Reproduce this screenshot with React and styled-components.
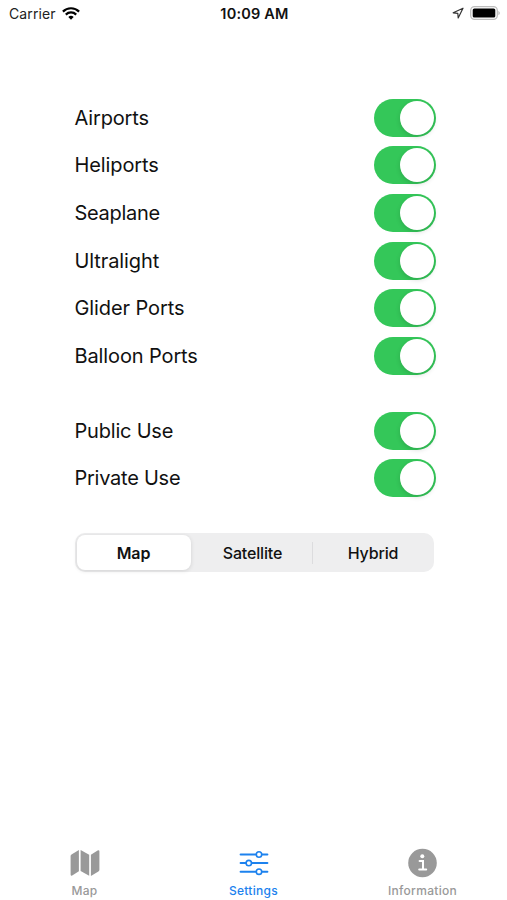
import React, { useState } from 'react'
import styled, { createGlobalStyle } from 'styled-components'

const GlobalStyle = createGlobalStyle`
  body {
    margin: 0;
    background: #fff;
    overflow: hidden;
  }
`

const Screen = styled.div`
  box-sizing: border-box;
  width: 507px;
  height: 900px;
  display: flex;
  flex-direction: column;
  background: #fff;
  color: #111;
  font-family: Inter, 'Liberation Sans', sans-serif;
`

const StatusBar = styled.header`
  display: grid;
  grid-template-columns: 1fr auto 1fr;
  align-items: center;
  height: 27px;
  padding: 0 7px 0 9px;
`

const Carrier = styled.div`
  display: flex;
  align-items: center;
  gap: 6px;
  font-size: 14px;
  letter-spacing: 0.1px;
  color: #222;
`

const Clock = styled.div`
  font-size: 14.5px;
  font-weight: 600;
  letter-spacing: 0.2px;
`

const Indicators = styled.div`
  display: flex;
  align-items: center;
  justify-content: flex-end;
  gap: 6px;
  padding-bottom: 1px;
`

const Content = styled.main`
  flex: 1;
  padding: 67px 71px 0 74.5px;
`

const Group = styled.div`
  margin-bottom: 27px;
`

const Row = styled.div`
  display: flex;
  align-items: center;
  justify-content: space-between;
  height: 47.66px;
`

const Label = styled.span`
  font-size: 20px;
  line-height: 24px;
  letter-spacing: ${({ $spacing }) => $spacing}px;
`

const Switch = styled.button`
  display: flex;
  align-items: center;
  justify-content: ${({ $on }) => ($on ? 'flex-end' : 'flex-start')};
  width: 62.5px;
  height: 38px;
  padding: 2px;
  border: 0;
  border-radius: 19px;
  background: ${({ $on }) => ($on ? '#34c759' : '#e9e9ea')};
`

const Knob = styled.span`
  width: 34px;
  height: 34px;
  border-radius: 50%;
  background: #fff;
  box-shadow: 0 2px 5px rgba(0, 0, 0, 0.14);
`

const Segments = styled.div`
  display: grid;
  grid-template-columns: 114px 124px 1fr;
  box-sizing: border-box;
  width: 359px;
  height: 39px;
  margin-top: 31px;
  padding: 2px;
  border-radius: 10px;
  background: #eeeeef;
`

const Segment = styled.button`
  display: flex;
  align-items: center;
  justify-content: center;
  padding: 0;
  border: 0;
  border-radius: 8px;
  background: ${({ $active }) => ($active ? '#fff' : 'transparent')};
  box-shadow: ${({ $active }) => ($active ? '0 1px 4px rgba(0, 0, 0, 0.12)' : 'none')};
  color: #111;
  font-family: inherit;
  font-size: 16px;
  font-weight: ${({ $active }) => ($active ? 600 : 500)};
  letter-spacing: -0.15px;
`

const DividedSegment = styled(Segment)`
  &::after {
    content: '';
    width: 1px;
    height: 22px;
    margin-left: 30px;
    margin-right: -31px;
    background: #dcdcde;
  }
`

const TabBar = styled.nav`
  display: grid;
  grid-template-columns: repeat(3, 1fr);
  height: 54px;
`

const Tab = styled.button`
  display: flex;
  flex-direction: column;
  align-items: center;
  padding: 2px 0 0;
  border: 0;
  background: none;
  color: ${({ $active }) => ($active ? '#1d82ee' : '#999')};
  font-family: inherit;
  font-size: 12px;
  font-weight: 500;
  line-height: 15px;
  letter-spacing: 0.3px;
`

const TabIcon = styled.svg`
  width: 30px;
  height: 30px;
  margin-bottom: 5px;
`

const WifiIcon = () => (
  <svg width="18" height="14" viewBox="0 0 18 14" fill="none" stroke="#000" strokeWidth="2.2">
    <path d="M0.9 4.6a11.5 11.5 0 0 1 16.2 0" />
    <path d="M3.8 7.6a7.4 7.4 0 0 1 10.4 0" />
    <path d="M6.3 10a3.8 3.8 0 0 1 5.4 0L9 12.7z" fill="#000" stroke="none" />
  </svg>
)

const LocationIcon = () => (
  <svg width="12" height="12" viewBox="0 0 12 12" fill="none" stroke="#333" strokeWidth="1.2" strokeLinejoin="round">
    <path d="M11 1.2 1.2 5.8l4.6.5.4 4.6z" />
  </svg>
)

const BatteryIcon = () => (
  <svg width="30" height="14" viewBox="0 0 30 14">
    <rect x="0.7" y="0.7" width="26.6" height="12.6" rx="3.8" fill="#fff" stroke="#bdbdbd" strokeWidth="1.3" />
    <rect x="2.7" y="2.5" width="22.6" height="9" rx="1.6" />
    <path d="M28.4 4.7q3 2.3 0 4.6z" fill="#bdbdbd" />
  </svg>
)

const MapIcon = () => (
  <TabIcon viewBox="0 0 30 30" fill="currentColor">
    <path d="M8.9 2v21.2l-6.7 4.2Q.6 28.2.6 26.5V8.1q0-1.1.9-1.7z" />
    <path d="m10.6 2 8.6 4.7v21.1l-8.6-4.7z" />
    <path d="M20.9 6.7 27.6 2.5q1.8-1 1.8.9v18.4q0 1.1-1 1.7l-7.5 4.5z" />
  </TabIcon>
)

const SlidersIcon = () => (
  <TabIcon viewBox="0 0 30 30" fill="none" stroke="currentColor" strokeWidth="2" strokeLinecap="round">
    <path d="M1.6 6.5h15.4M23 6.5h5.4M1.6 15.1h5.2M12.8 15.1h15.6M1.6 23.7h15.4M23 23.7h5.4" />
    <circle cx="20" cy="6.5" r="2.7" strokeWidth="1.6" />
    <circle cx="9.8" cy="15.1" r="2.7" strokeWidth="1.6" />
    <circle cx="20" cy="23.7" r="2.7" strokeWidth="1.6" />
  </TabIcon>
)

const InfoIcon = () => (
  <TabIcon viewBox="0 0 30 30">
    <circle cx="14.5" cy="15" r="14.3" fill="currentColor" />
    <circle cx="14.3" cy="8.3" r="2" fill="#fff" />
    <path d="M11.6 12.9h3.4v8.5M11.2 21.5h7" fill="none" stroke="#fff" strokeWidth="2" strokeLinecap="round" />
  </TabIcon>
)

// letter spacing per label, in px
const groups = [
  [
    ['Airports', -0.15],
    ['Heliports', -0.1],
    ['Seaplane', -0.3],
    ['Ultralight', -0.1],
    ['Glider Ports', -0.1],
    ['Balloon Ports', -0.12],
  ],
  [
    ['Public Use', -0.2],
    ['Private Use', -0.25],
  ],
]

const App = () => {
  const [off, setOff] = useState({})
  const [mapType, setMapType] = useState('Map')

  return (
    <Screen>
      <GlobalStyle />
      <StatusBar>
        <Carrier>
          Carrier
          <WifiIcon />
        </Carrier>
        <Clock>10:09 AM</Clock>
        <Indicators>
          <LocationIcon />
          <BatteryIcon />
        </Indicators>
      </StatusBar>
      <Content>
        {groups.map((group, i) => (
          <Group key={i}>
            {group.map(([name, spacing]) => (
              <Row key={name}>
                <Label $spacing={spacing}>{name}</Label>
                <Switch
                  $on={!off[name]}
                  role="switch"
                  aria-checked={!off[name]}
                  aria-label={name}
                  onClick={() => setOff({ ...off, [name]: !off[name] })}
                >
                  <Knob />
                </Switch>
              </Row>
            ))}
          </Group>
        ))}
        <Segments>
          <Segment $active={mapType === 'Map'} onClick={() => setMapType('Map')}>
            Map
          </Segment>
          <DividedSegment $active={mapType === 'Satellite'} onClick={() => setMapType('Satellite')}>
            Satellite
          </DividedSegment>
          <Segment $active={mapType === 'Hybrid'} onClick={() => setMapType('Hybrid')}>
            Hybrid
          </Segment>
        </Segments>
      </Content>
      <TabBar>
        <Tab>
          <MapIcon />
          Map
        </Tab>
        <Tab $active>
          <SlidersIcon />
          Settings
        </Tab>
        <Tab>
          <InfoIcon />
          Information
        </Tab>
      </TabBar>
    </Screen>
  )
}

export default App
